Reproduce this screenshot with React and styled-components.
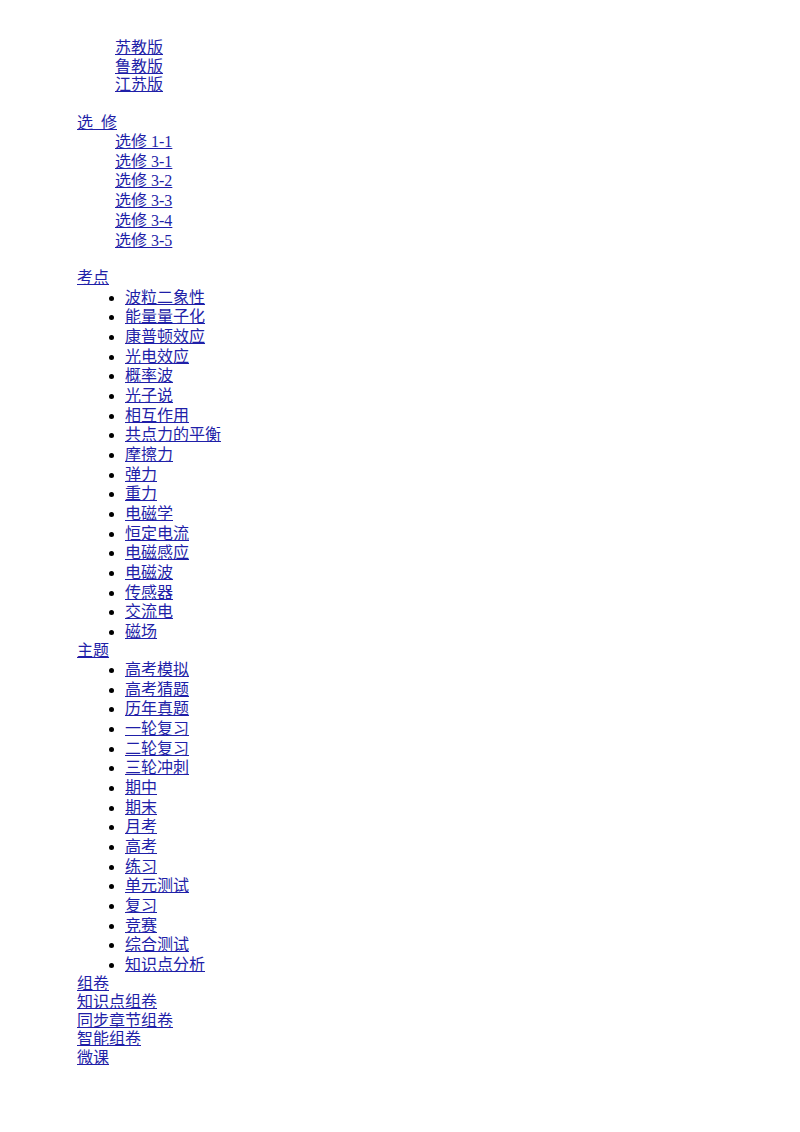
import styled, { createGlobalStyle } from "styled-components";

const GlobalStyle = createGlobalStyle`
  body {
    margin: 0;
    background: #fff;
    font-family: "Liberation Serif", "Noto Sans CJK SC", serif;
    font-size: 16px;
  }
`;

const Page = styled.div`
  padding: 39px 0 40px 77px;
`;

const Section = styled.div`
  margin-bottom: ${(p) => p.$gap || 0}px;
`;

const Link = styled.a`
  color: #1f1fa8;
  text-decoration: underline;
  cursor: pointer;
`;

const TopLink = styled(Link)`
  display: block;
  width: max-content;
  line-height: 18.5px;
`;

const PlainList = styled.ul`
  margin: 0;
  padding-left: 38px;
  list-style: none;
`;

const PlainItem = styled.li`
  line-height: ${(p) => p.$lh || 19.7}px;
`;

const BulletList = styled.ul`
  margin: 0;
  padding-left: 48px;
  list-style: disc;
  color: #000;
`;

const BulletItem = styled.li`
  line-height: 19.66px;
`;

const editions = ["苏教版", "鲁教版", "江苏版"];
const electives = ["选修 1-1", "选修 3-1", "选修 3-2", "选修 3-3", "选修 3-4", "选修 3-5"];
const points = [
  "波粒二象性", "能量量子化", "康普顿效应", "光电效应", "概率波", "光子说",
  "相互作用", "共点力的平衡", "摩擦力", "弹力", "重力", "电磁学", "恒定电流",
  "电磁感应", "电磁波", "传感器", "交流电", "磁场",
];
const topics = [
  "高考模拟", "高考猜题", "历年真题", "一轮复习", "二轮复习", "三轮冲刺", "期中",
  "期末", "月考", "高考", "练习", "单元测试", "复习", "竞赛", "综合测试", "知识点分析",
];
const papers = ["知识点组卷", "同步章节组卷", "智能组卷", "微课"];

export default function App() {
  return (
    <>
      <GlobalStyle />
      <Page>
        <Section $gap={19}>
          <PlainList>
            {editions.map((e) => (
              <PlainItem key={e} $lh={18.5}>
                <Link>{e}</Link>
              </PlainItem>
            ))}
          </PlainList>
        </Section>

        <Section $gap={19}>
          <TopLink>选&nbsp;&nbsp;修</TopLink>
          <PlainList>
            {electives.map((e) => (
              <PlainItem key={e}>
                <Link>{e}</Link>
              </PlainItem>
            ))}
          </PlainList>
        </Section>

        <Section>
          <TopLink>考点</TopLink>
          <BulletList>
            {points.map((p) => (
              <BulletItem key={p}>
                <Link>{p}</Link>
              </BulletItem>
            ))}
          </BulletList>
        </Section>

        <Section>
          <TopLink>主题</TopLink>
          <BulletList>
            {topics.map((t) => (
              <BulletItem key={t}>
                <Link>{t}</Link>
              </BulletItem>
            ))}
          </BulletList>
        </Section>

        <Section>
          <TopLink>组卷</TopLink>
          {papers.map((p) => (
            <TopLink key={p}>{p}</TopLink>
          ))}
        </Section>
      </Page>
    </>
  );
}
